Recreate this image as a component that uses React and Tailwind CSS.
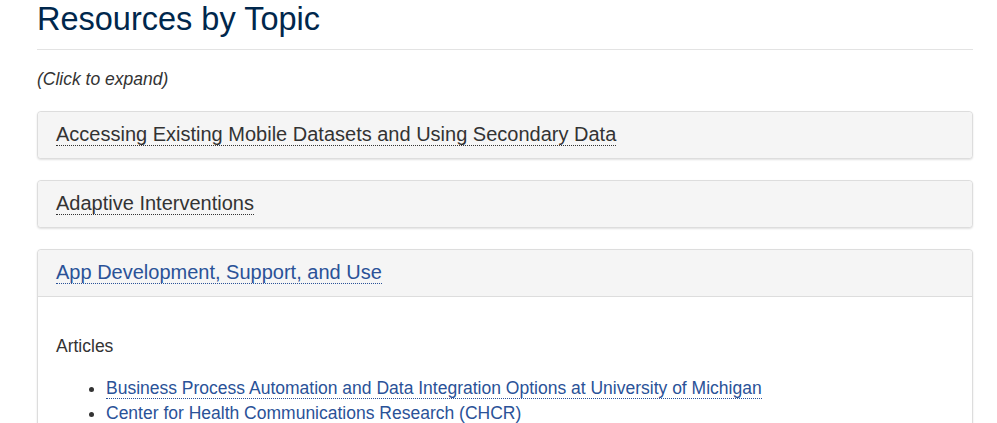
const topics = [
  { title: 'Accessing Existing Mobile Datasets and Using Secondary Data', open: false },
  { title: 'Adaptive Interventions', open: false },
  { title: 'App Development, Support, and Use', open: true },
];

const articles = [
  'Business Process Automation and Data Integration Options at University of Michigan',
  'Center for Health Communications Research (CHCR)',
];

const Panel = ({ title, open, children }) => (
  <div className="mb-[21px] rounded border border-[#dddddd] bg-white shadow-[0_1px_2px_rgba(0,0,0,0.12)]">
    <div
      className={`rounded-t bg-[#f5f5f5] pl-[18px] pr-4 pt-[11px] pb-[13px] text-[20px] leading-[22px] ${open ? 'border-b border-[#dddddd]' : 'rounded-b'}`}
    >
      <span
        className={`border-b border-dotted ${open ? 'border-[#2a5298] text-[#2a5298]' : 'border-[#333333] text-[#333333]'}`}
      >
        {title}
      </span>
    </div>
    {open && <div className="pl-[18px] pr-4 pt-[37px] pb-6">{children}</div>}
  </div>
);

export default function App() {
  return (
    <div className="min-h-screen bg-white font-['Liberation_Sans',Arial,sans-serif] text-[#333333]">
      <div className="ml-[37px] w-[936px] pt-[2px]">
        <h1 className="mb-3 text-[32.5px] leading-[35px] text-[#00274c]">Resources by Topic</h1>
        <div className="border-t border-[#e3e3e3]" />
        <p className="mt-[19px] mb-[22px] text-[17.5px] italic leading-5">(Click to expand)</p>

        {topics.map((t) => (
          <Panel key={t.title} title={t.title} open={t.open}>
            <p className="text-[17.5px] leading-[25px]">Articles</p>
            <ul className="mt-[17px] list-disc pl-[50px] text-[17.5px] leading-[25px]">
              {articles.map((a) => (
                <li key={a}>
                  <span className="border-b border-dotted border-[#2a5298] text-[#2a5298]">{a}</span>
                </li>
              ))}
            </ul>
          </Panel>
        ))}
      </div>
    </div>
  );
}
